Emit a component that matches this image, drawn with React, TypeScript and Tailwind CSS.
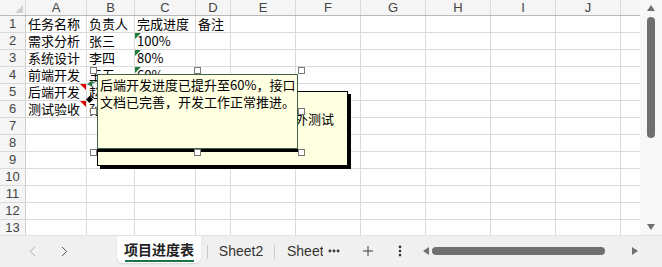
import { ChevronLeft, ChevronRight, Plus, EllipsisVertical, Ellipsis } from "lucide-react";

const cols = ["", "A", "B", "C", "D", "E", "F", "G", "H", "I", "J", ""];
const widths = [
  "w-[26px]",
  "w-[61px]",
  "w-[48px]",
  "w-[61px]",
  "w-[35px]",
  "w-[65px]",
  "w-[65px]",
  "w-[65px]",
  "w-[65px]",
  "w-[65px]",
  "w-[65px]",
  "w-[30px]",
];

type Cell = { text?: string; green?: boolean; red?: boolean };

const data: Cell[][] = [
  [{ text: "任务名称" }, { text: "负责人" }, { text: "完成进度" }, { text: "备注" }],
  [{ text: "需求分析" }, { text: "张三" }, { text: "100%", green: true }],
  [{ text: "系统设计" }, { text: "李四" }, { text: "80%", green: true }],
  [{ text: "前端开发" }, { text: "王五" }, { text: "60%", green: true }],
  [{ text: "后端开发", red: true }, { text: "赵六" }, { text: "60%", green: true }],
  [{ text: "测试验收", red: true }, { text: "孙七" }, { text: "0%", green: true }],
];

function Handle({ pos }: { pos: string }) {
  return <div className={`absolute h-[7px] w-[7px] border border-[#7a7a7a] bg-white ${pos}`} />;
}

function Grid() {
  const rows = Array.from({ length: 13 }, (_, i) => i);
  return (
    <div className="relative h-[235px] flex-1 overflow-hidden bg-white">
      <div className="flex h-[16px] border-b border-[#b8b8b8] bg-[#f5f5f5] text-[13px] leading-[15px] text-[#444] font-['Liberation_Sans',sans-serif]">
        {cols.map((c, i) => (
          <div
            key={i}
            className={`${widths[i]} relative shrink-0 border-r border-[#dadada] text-center`}
          >
            {i === 0 ? (
              <svg className="absolute left-[15px] top-[5px]" width="8" height="8" viewBox="0 0 8 8">
                <polygon points="8,0 8,8 0,8" fill="#cfcfcf" />
              </svg>
            ) : (
              c
            )}
          </div>
        ))}
      </div>
      {rows.map((r) => (
        <div key={r} className="flex h-[17px] border-b border-[#dadada]">
          {cols.map((_, i) => {
            if (i === 0)
              return (
                <div
                  key={i}
                  className={`${widths[i]} shrink-0 border-r border-[#cfcfcf] bg-[#f5f5f5] text-center text-[13px] leading-[16px] text-[#444] font-['Liberation_Sans',sans-serif]`}
                >
                  {r + 1}
                </div>
              );
            const cell = data[r]?.[i - 1];
            return (
              <div
                key={i}
                className={`${widths[i]} relative shrink-0 overflow-visible whitespace-nowrap border-r border-[#dadada] pl-[2px] text-[13px] leading-[16px] text-black font-['Noto_Sans_CJK_SC',sans-serif]`}
              >
                {cell?.green && (
                  <svg className="absolute left-0 top-0" width="6" height="6" viewBox="0 0 6 6">
                    <polygon points="0,0 6,0 0,6" fill="#1e7b3e" />
                  </svg>
                )}
                {cell?.red && (
                  <svg className="absolute right-0 top-0" width="6" height="6" viewBox="0 0 6 6">
                    <polygon points="0,0 6,0 6,6" fill="#e00000" />
                  </svg>
                )}
                {cell?.text}
              </div>
            );
          })}
        </div>
      ))}

      {/* comment behind */}
      <div className="absolute left-[97px] top-[91px] h-[75px] w-[251px] border border-black bg-[#ffffe1] px-[2px] pt-[1px] text-[13px] leading-[17px] text-black shadow-[3px_3px_0_#000] font-['Noto_Sans_CJK_SC',sans-serif] whitespace-nowrap">
        <div>测试验收计划在下周开始，</div>
        <div>等待前后端接口联调完成后进行对外测试</div>
      </div>

      {/* comment in front (selected) */}
      <div className="absolute left-[97px] top-[74px] h-[75px] w-[201px] border border-[#3f6148] bg-[#ffffe1] px-[2px] pt-[1px] text-[13px] leading-[17px] text-black shadow-[0_3px_0_#000] font-['Noto_Sans_CJK_SC',sans-serif] whitespace-nowrap">
        <div>后端开发进度已提升至60%，接口</div>
        <div>文档已完善，开发工作正常推进。</div>
      </div>

      <svg className="absolute left-[84px] top-[78px]" width="14" height="28" viewBox="0 0 14 28">
        <polygon points="3,6 9,2 8,9" fill="#2a7a46" />
        <line x1="8" y1="5" x2="13" y2="3" stroke="#2a7a46" strokeWidth="1" />
        <rect x="3" y="19" width="5" height="5" fill="#000" transform="rotate(45 5.5 21.5)" />
      </svg>

      <Handle pos="left-[90px] top-[67px]" />
      <Handle pos="left-[194px] top-[67px]" />
      <Handle pos="left-[298px] top-[67px]" />
      <Handle pos="left-[90px] top-[108px]" />
      <Handle pos="left-[298px] top-[108px]" />
      <Handle pos="left-[90px] top-[149px]" />
      <Handle pos="left-[194px] top-[149px]" />
      <Handle pos="left-[298px] top-[149px]" />
    </div>
  );
}

function VScroll() {
  return (
    <div className="flex h-[235px] w-[22px] flex-col items-center bg-[#f7f7f7]">
      <svg className="mt-[5px]" width="8" height="6" viewBox="0 0 8 6">
        <polygon points="4,0 8,6 0,6" fill="#6f6f6f" />
      </svg>
      <div className="mt-[6px] h-[121px] w-[8px] rounded-full bg-[#6f6f6f]" />
      <div className="flex-1" />
      <svg className="mb-[5px]" width="8" height="6" viewBox="0 0 8 6">
        <polygon points="0,0 8,0 4,6" fill="#6f6f6f" />
      </svg>
    </div>
  );
}

function TabBar() {
  return (
    <div className="flex h-[32px] items-start border-t border-[#e2e2e2] bg-[#f0f0f0] text-[13px] text-[#333] font-['Noto_Sans_CJK_SC',sans-serif]">
      <div className="ml-[16px] flex h-[30px] w-[32px] items-center justify-center text-[#a8a8a8]">
        <ChevronLeft size={17} strokeWidth={1.3} />
      </div>
      <div className="flex h-[30px] w-[32px] items-center justify-center text-[#444]">
        <ChevronRight size={17} strokeWidth={1.3} />
      </div>
      <div className="ml-[37px] flex h-[27px] w-[84px] flex-col items-center rounded-b-md bg-white shadow-[0_1px_2px_rgba(0,0,0,0.12)]">
        <span className="mt-[5px] text-[14px] font-bold leading-[17px] text-[#222]">项目进度表</span>
        <div className="mt-[2px] h-[2px] w-[69px] bg-[#1e7145]" />
      </div>
      <div className="ml-[6px] mt-[9px] h-[14px] w-px bg-[#c8c8c8]" />
      <div className="flex h-[30px] w-[66px] items-center justify-center font-['Liberation_Sans',sans-serif] text-[14px]">
        Sheet2
      </div>
      <div className="mt-[9px] h-[14px] w-px bg-[#c8c8c8]" />
      <div className="ml-[12px] flex h-[30px] w-[36px] items-center overflow-hidden whitespace-nowrap font-['Liberation_Sans',sans-serif] text-[14px]">
        Sheet
      </div>
      <div className="flex h-[30px] w-[22px] items-center justify-center text-[#333]">
        <Ellipsis size={14} strokeWidth={3} />
      </div>
      <div className="ml-[15px] flex h-[30px] w-[16px] items-center justify-center text-[#333]">
        <Plus size={16} strokeWidth={1.4} />
      </div>
      <div className="ml-[16px] flex h-[30px] w-[16px] items-center justify-center text-[#333]">
        <EllipsisVertical size={14} strokeWidth={2.5} />
      </div>
      <div className="ml-[13px] flex h-[30px] w-[220px] items-center">
        <svg className="ml-[2px]" width="6" height="8" viewBox="0 0 6 8">
          <polygon points="0,4 6,0 6,8" fill="#6f6f6f" />
        </svg>
        <div className="ml-[3px] h-[8px] w-[173px] rounded-full bg-[#6f6f6f]" />
        <div className="flex-1" />
        <svg className="mr-[3px]" width="6" height="8" viewBox="0 0 6 8">
          <polygon points="0,0 6,4 0,8" fill="#6f6f6f" />
        </svg>
      </div>
    </div>
  );
}

export default function App() {
  return (
    <div className="flex h-[267px] w-[662px] flex-col overflow-hidden bg-white">
      <div className="flex">
        <Grid />
        <VScroll />
      </div>
      <TabBar />
    </div>
  );
}
